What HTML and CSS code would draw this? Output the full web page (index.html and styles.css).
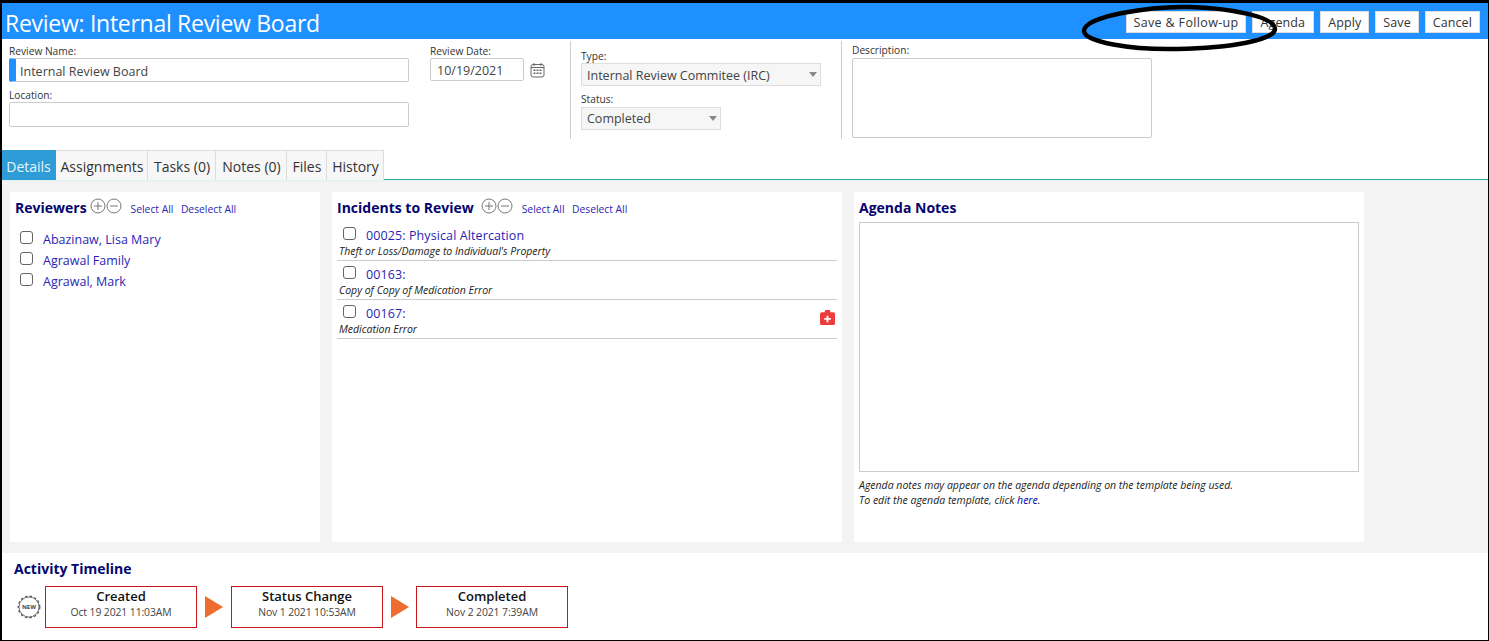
FILE: index.html
```html
<!DOCTYPE html>
<html lang="en">
<head>
    <meta charset="UTF-8">
    <title>Review: Internal Review Board</title>
    <link rel="stylesheet" href="styles.css">
</head>
<body>
<div class="page">
    <header class="titlebar">
        <h1>Review: Internal Review Board</h1>
        <div class="actions">
            <button class="btn-followup">Save &amp; Follow-up</button>
            <button class="btn-agenda">Agenda</button>
            <button>Apply</button>
            <button>Save</button>
            <button>Cancel</button>
        </div>
    </header>

    <!-- hand drawn circle around the first button -->
    <svg class="scribble" width="200" height="52" viewBox="0 0 200 52">
        <path d="M108 5 C70 4 3 14 3 29 C3 40 50 48 96 47 C150 46 194 38 194 27 C194 15 150 6 108 5 Z" fill="none" stroke="#000" stroke-width="4.500"/>
    </svg>

    <section class="form">
        <div class="col col-name">
            <label>Review Name:</label>
            <input class="field field-required" value="Internal Review Board">
            <label class="label-next">Location:</label>
            <input class="field field-location">
        </div>
        <div class="col col-date">
            <label>Review Date:</label>
            <div class="date-row">
                <input class="field field-date" value="10/19/2021">
                <svg class="cal" width="15" height="16" viewBox="0 0 15 16">
                    <rect x="1" y="2.5" width="13" height="12.5" rx="2" fill="none" stroke="#666"/>
                    <path d="M1 5.500h13M4 1v3M11 1v3" stroke="#666" fill="none"/>
                    <path d="M3.500 7.500h2V9h-2zM6.500 7.500h2V9h-2zM9.500 7.500h2V9h-2zM3.500 10.500h2V12h-2zM6.500 10.500h2V12h-2zM9.500 10.500h2V12h-2z" fill="#666"/>
                </svg>
            </div>
        </div>
        <div class="col col-type">
            <label>Type:</label>
            <div class="select select-type">Internal Review Commitee (IRC)<span class="caret"></span></div>
            <label class="label-status">Status:</label>
            <div class="select select-status">Completed<span class="caret"></span></div>
        </div>
        <div class="col col-desc">
            <label>Description:</label>
            <textarea class="field field-desc"></textarea>
        </div>
    </section>

    <nav class="tabs">
        <a class="tab active">Details</a>
        <a class="tab">Assignments</a>
        <a class="tab">Tasks (0)</a>
        <a class="tab">Notes (0)</a>
        <a class="tab">Files</a>
        <a class="tab">History</a>
    </nav>

    <main class="details">
        <section class="panel panel-reviewers">
            <div class="panel-head">
                <h2>Reviewers</h2>
                <span class="toggles">
                    <svg width="16" height="16" viewBox="0 0 16 16"><circle cx="8" cy="8" r="7" fill="none" stroke="#777"/><path d="M4 8h8M8 4v8" stroke="#777"/></svg>
                    <svg width="16" height="16" viewBox="0 0 16 16"><circle cx="8" cy="8" r="7" fill="none" stroke="#777"/><path d="M4 8h8" stroke="#777"/></svg>
                </span>
                <a class="small-link">Select All</a>
                <a class="small-link">Deselect All</a>
            </div>
            <ul class="reviewers">
                <li><input type="checkbox"><a>Abazinaw, Lisa Mary</a></li>
                <li><input type="checkbox"><a>Agrawal Family</a></li>
                <li><input type="checkbox"><a>Agrawal, Mark</a></li>
            </ul>
        </section>

        <section class="panel panel-incidents">
            <div class="panel-head">
                <h2>Incidents to Review</h2>
                <span class="toggles">
                    <svg width="16" height="16" viewBox="0 0 16 16"><circle cx="8" cy="8" r="7" fill="none" stroke="#777"/><path d="M4 8h8M8 4v8" stroke="#777"/></svg>
                    <svg width="16" height="16" viewBox="0 0 16 16"><circle cx="8" cy="8" r="7" fill="none" stroke="#777"/><path d="M4 8h8" stroke="#777"/></svg>
                </span>
                <a class="small-link">Select All</a>
                <a class="small-link">Deselect All</a>
            </div>
            <div class="incidents">
                <div class="incident">
                    <div class="incident-top"><input type="checkbox"><a>00025: Physical Altercation</a></div>
                    <em>Theft or Loss/Damage to Individual's Property</em>
                </div>
                <div class="incident">
                    <div class="incident-top"><input type="checkbox"><a>00163:</a></div>
                    <em>Copy of Copy of Medication Error</em>
                </div>
                <div class="incident">
                    <div class="incident-top"><input type="checkbox"><a>00167:</a></div>
                    <em>Medication Error</em>
                    <svg class="medical" width="15" height="15" viewBox="0 0 16 16">
                        <path d="M5 2.500V1.500A1.500 1.500 0 0 1 6.500 0h3A1.500 1.500 0 0 1 11 1.500V2.500h3a2 2 0 0 1 2 2V14a2 2 0 0 1-2 2H2a2 2 0 0 1-2-2V4.500a2 2 0 0 1 2-2z" fill="#ee3b3b"/>
                        <path d="M7 6h2v2.500h2.500v2H9V13H7v-2.500H4.500v-2H7z" fill="#fff"/>
                    </svg>
                </div>
            </div>
        </section>

        <section class="panel panel-notes">
            <h2>Agenda Notes</h2>
            <textarea class="notes-box"></textarea>
            <p class="hint">Agenda notes may appear on the agenda depending on the template being used.<br>To edit the agenda template, click <a>here</a>.</p>
        </section>
    </main>

    <footer class="timeline">
        <h2>Activity Timeline</h2>
        <div class="steps">
            <svg class="new-badge" width="24" height="24" viewBox="0 0 24 24">
                <circle cx="12" cy="12" r="10" fill="none" stroke="#555" stroke-width="0.800"/>
                <circle cx="12" cy="12" r="10.800" fill="none" stroke="#555" stroke-width="1.200" stroke-dasharray="2.500 2.150"/>
                <text x="12" y="14" text-anchor="middle" class="new-text">NEW</text>
            </svg>
            <div class="step"><strong>Created</strong><span>Oct 19 2021 11:03AM</span></div>
            <span class="arrow"></span>
            <div class="step"><strong>Status Change</strong><span>Nov 1 2021 10:53AM</span></div>
            <span class="arrow arrow-last"></span>
            <div class="step"><strong>Completed</strong><span>Nov 2 2021 7:39AM</span></div>
        </div>
    </footer>
</div>
</body>
</html>
```

FILE: styles.css
```css
* {
    box-sizing: border-box;
}

html, body {
    margin: 0;
    padding: 0;
    height: 100%;
    overflow: hidden;
}

body {
    font-family: "Open Sans", "Noto Sans", sans-serif;
    font-size: 12.5px;
    color: #333;
    background: #000;
}

a {
    color: #2a1fb5;
}

.page {
    position: relative;
    height: 640px;
    margin-left: 2px;
    margin-right: 1px;
    padding-top: 3px;
    background: #000;
    display: flex;
    flex-direction: column;
}

/* title bar */
.titlebar {
    height: 36px;
    background: #1e90ff;
    display: flex;
    justify-content: space-between;
    align-items: center;
    padding: 0 8px 0 3px;
    flex-shrink: 0;
}

.titlebar h1 {
    margin: 3px 0 0;
    font-size: 23px;
    font-weight: 400;
    color: #fff;
    letter-spacing: -0.28px;
}

.actions {
    display: flex;
    gap: 6px;
    margin-top: 2px;
}

.actions button {
    height: 22px;
    padding: 0 7px;
    border: 1px solid #ddd;
    background: #fff;
    color: #333;
    font-family: inherit;
    font-size: 12.5px;
    letter-spacing: 0.1px;
}

.actions .btn-agenda {
    padding: 0 8px;
}

.actions .btn-followup {
    padding: 0 6px;
    letter-spacing: 0.35px;
}

.scribble {
    position: absolute;
    top: 2px;
    left: 1079px;
}

/* form */
.form {
    height: 111px;
    background: #fff;
    display: flex;
    flex-shrink: 0;
    padding-left: 7px;
}

.form label {
    display: block;
    font-size: 10.2px;
    line-height: 14px;
    color: #333;
}

.field {
    display: block;
    border: 1px solid #ccc;
    border-radius: 2px;
    font-family: inherit;
    font-size: 12.5px;
    color: #444;
    background: #fff;
    padding: 2px 10px 0;
    outline: none;
    resize: none;
}

.col-name {
    width: 421px;
    padding-top: 5px;
}

.col-name .field {
    width: 400px;
    height: 24px;
}

.col-name .field-location {
    height: 25px;
}

.col-name .field-required {
    border-left: 7px solid #1e90ff;
    padding-left: 4px;
}

.col-name .label-next {
    margin-top: 6px;
}

.col-date {
    width: 140px;
    padding-top: 5px;
}

.date-row {
    display: flex;
    align-items: center;
    gap: 6px;
}

.field-date {
    width: 94px;
    height: 23px;
    padding: 1px 6px 0;
}

.col-type {
    width: 271px;
    padding: 8px 0 0 10px;
    height: 98px;
    border-left: 1px solid #ccc;
    margin-top: 2px;
}

.select {
    position: relative;
    height: 23px;
    line-height: 21px;
    background: #f6f6f6;
    border: 1px solid #ddd;
    padding-left: 5px;
    color: #444;
}

.select-type {
    width: 240px;
    line-height: 24px;
}

.select-status {
    width: 140px;
}

.label-status {
    margin-top: 6px;
    margin-bottom: 1px;
}

.caret {
    position: absolute;
    right: 3px;
    top: 8px;
    width: 0;
    height: 0;
    border-left: 4.500px solid transparent;
    border-right: 4.500px solid transparent;
    border-top: 5px solid #888;
}

.col-desc {
    border-left: 1px solid #ccc;
    padding: 2px 0 0 10px;
    height: 98px;
    margin-top: 2px;
}

.col-desc label {
    margin-bottom: 1px;
}

.field-desc {
    width: 300px;
    height: 80px;
}

/* tabs */
.tabs {
    height: 30px;
    background: #fff;
    display: grid;
    grid-template-columns: 54px 92px 68px 71px 40px 57px 1fr;
    flex-shrink: 0;
    border-bottom: 1px solid #2fa8a0;
}

.tab {
    line-height: 31px;
    padding-left: 1px;
    font-size: 14px;
    text-align: center;
    color: #333;
    background: #f7f7f7;
    border-right: 1px solid #ddd;
    border-top: 1px solid #ddd;
}

.tab.active {
    padding-left: 0;
    background: #2e9cd6;
    color: #e8f4fb;
    border-color: #2e9cd6;
}

/* details */
.details {
    height: 373px;
    background: #f3f3f3;
    border-top: 1px solid #dff3f1;
    display: flex;
    gap: 12px;
    padding: 11px 0 11px 8px;
    flex-shrink: 0;
}

.panel {
    background: #fff;
    padding: 5px 5px;
}

.panel-reviewers {
    width: 310px;
}

.panel-incidents {
    width: 510px;
}

.panel-notes {
    width: 510px;
}

h2 {
    margin: 0;
    font-size: 14px;
    font-weight: 700;
    color: #05056e;
}

.panel-head {
    display: flex;
    align-items: center;
    height: 21px;
}

.toggles {
    display: flex;
    margin: -4px 9px 0 3px;
}

.panel-incidents .toggles {
    margin-left: 7px;
}

.toggles svg {
    display: block;
}

.small-link {
    font-size: 10.3px;
    margin: 2px 7.5px 0 0;
}

input[type="checkbox"] {
    appearance: none;
    margin: 0 10px 0 5px;
    width: 13px;
    height: 13px;
    border: 1px solid #666;
    border-radius: 3px;
    background: #fff;
}

.reviewers {
    list-style: none;
    margin: 11px 0 0;
    padding: 0;
}

.reviewers li {
    height: 21px;
    display: flex;
    align-items: center;
    font-size: 12.5px;
}

.reviewers input {
    margin-top: -4px;
}

.incidents {
    margin-top: 3px;
    padding-top: 1px;
}

.incident {
    position: relative;
    height: 39px;
    border-bottom: 1px solid #ccc;
    padding: 5px 0 0 2px;
}

.incident-top {
    display: flex;
    align-items: center;
    height: 17px;
    font-size: 12.5px;
    letter-spacing: 0.1px;
}

.incident-top input {
    margin: -4px 10px 0 4px;
}

.incident em {
    display: block;
    font-size: 10.5px;
    line-height: 15px;
    color: #222;
}

.medical {
    position: absolute;
    right: 2px;
    top: 10px;
}

.panel-notes h2 {
    line-height: 22px;
}

.notes-box {
    display: block;
    width: 500px;
    height: 250px;
    margin-top: 3px;
    border: 1px solid #ccc;
    outline: none;
    resize: none;
}

.hint {
    margin: 6px 0 0;
    font-size: 10.5px;
    font-style: italic;
    line-height: 15px;
    color: #222;
}

.hint a {
    color: #0000a8;
}

/* timeline */
.timeline {
    flex: 1;
    background: #fff;
    padding: 6px 12px;
}

.steps {
    display: flex;
    align-items: center;
    margin-top: 8px;
}

.new-badge {
    margin: 0 4px 0 3px;
}

.new-text {
    font-size: 6px;
    font-weight: 700;
    fill: #444;
}

.step {
    width: 152px;
    height: 42px;
    border: 1px solid #c8161d;
    display: flex;
    flex-direction: column;
    align-items: center;
    padding-top: 1px;
}

.step strong {
    font-size: 13px;
    line-height: 17px;
    font-weight: 600;
    color: #111;
}

.step span {
    font-size: 10.4px;
    line-height: 14px;
    letter-spacing: -0.1px;
    color: #444;
}

.arrow {
    width: 0;
    height: 0;
    margin: 0 8px;
    border-top: 11px solid transparent;
    border-bottom: 11px solid transparent;
    border-left: 18px solid #ee6c2d;
}

.arrow-last {
    margin-right: 7px;
}
```
